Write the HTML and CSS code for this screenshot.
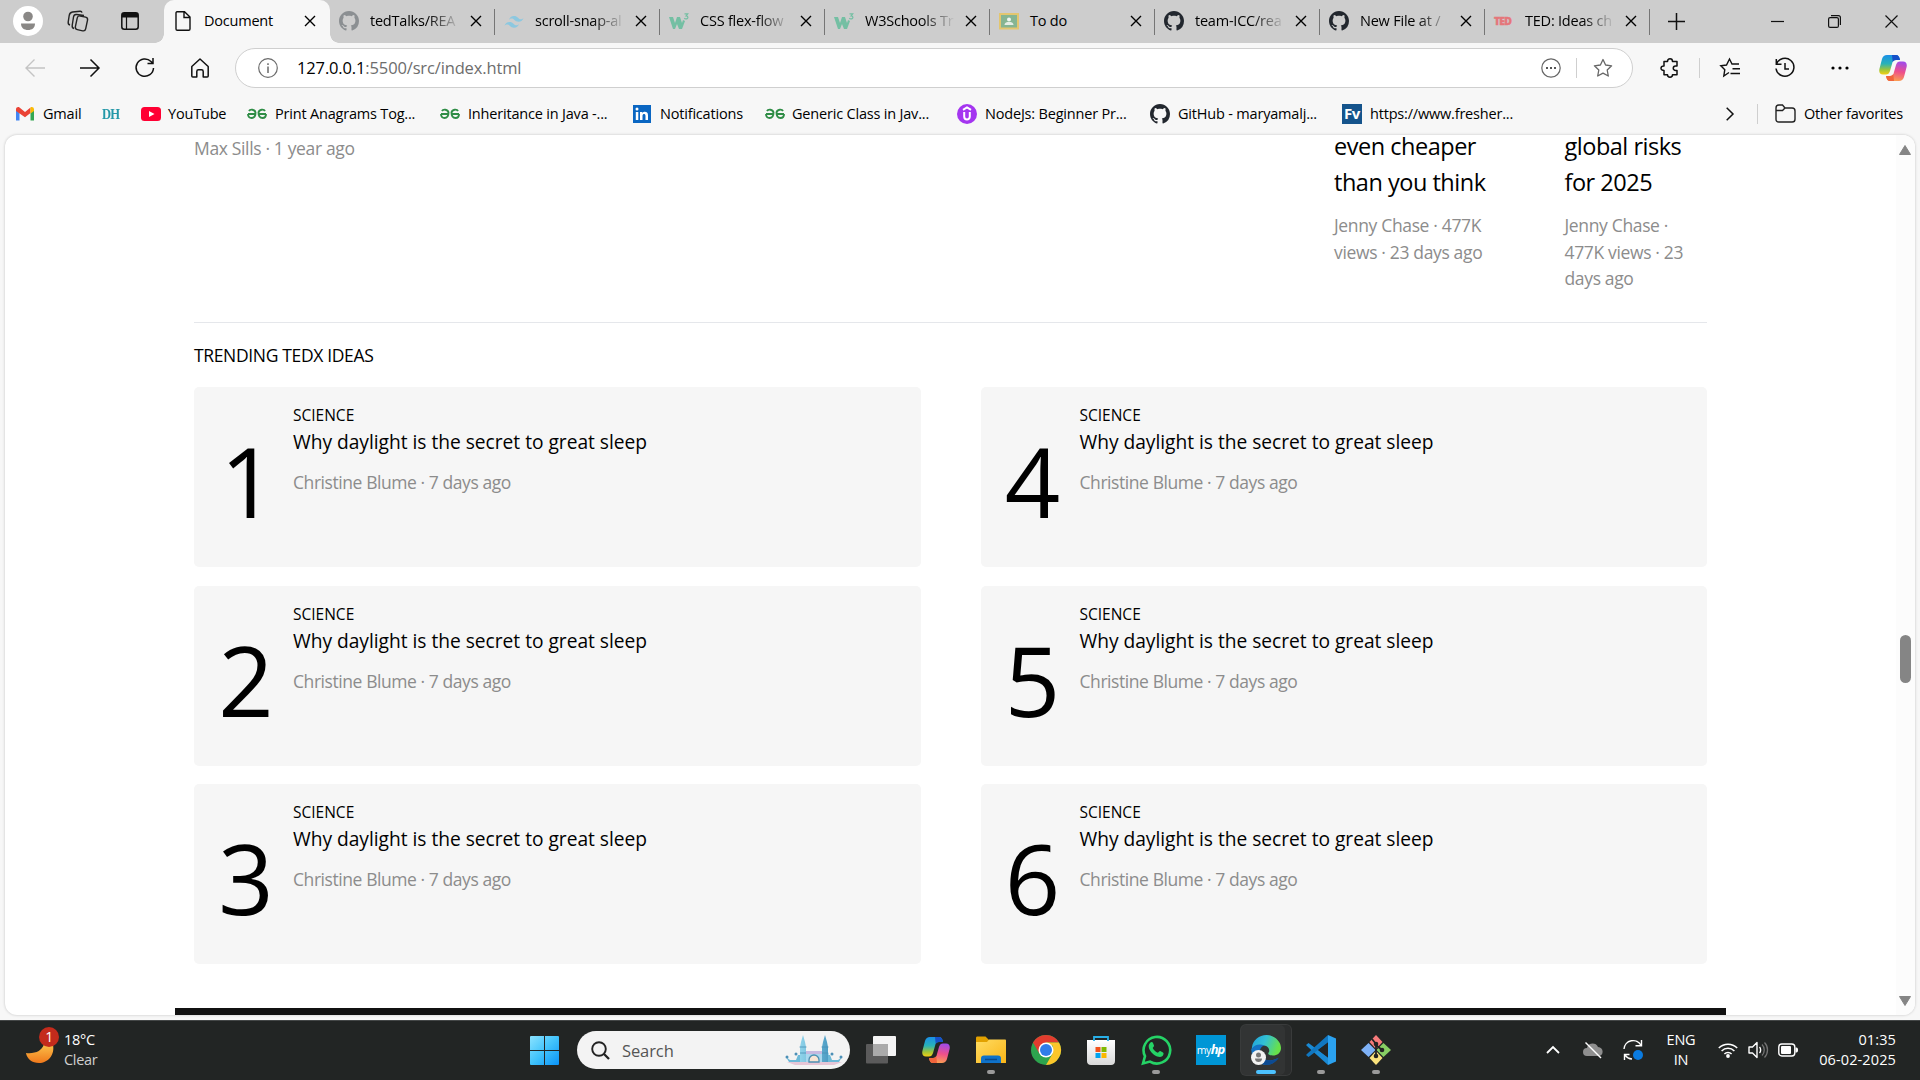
FILE: index.html
```html
<!DOCTYPE html>
<html lang="en">
<head>
<meta charset="utf-8">
<title>Document</title>
<link rel="stylesheet" href="styles.css">
</head>
<body>
<svg class="defs" aria-hidden="true">
  <defs>
    <linearGradient id="cpA" x1="0" y1="0" x2="0" y2="1"><stop offset="0" stop-color="#1a8fe8"/><stop offset=".45" stop-color="#28b2b8"/><stop offset=".75" stop-color="#9cc43c"/><stop offset="1" stop-color="#f4d013"/></linearGradient>
    <linearGradient id="cpB" x1=".6" y1="0" x2=".4" y2="1"><stop offset="0" stop-color="#a14be8"/><stop offset=".5" stop-color="#ee4f8b"/><stop offset="1" stop-color="#fba24f"/></linearGradient>
    <linearGradient id="moon" x1="0" y1="0" x2="0" y2="1"><stop offset="0" stop-color="#fbc24a"/><stop offset="1" stop-color="#f0791c"/></linearGradient>
    <linearGradient id="win" x1="0" y1="0" x2="1" y2="1"><stop offset="0" stop-color="#8be3ff"/><stop offset=".5" stop-color="#41c3fb"/><stop offset="1" stop-color="#0a93f8"/></linearGradient>
    <linearGradient id="fold" x1="0" y1="0" x2="1" y2="1"><stop offset="0" stop-color="#ffdc62"/><stop offset="1" stop-color="#f9b517"/></linearGradient>
    <linearGradient id="edgeA" x1="0" y1="0" x2="1" y2=".3"><stop offset="0" stop-color="#1f9fdc"/><stop offset=".5" stop-color="#32c0d4"/><stop offset="1" stop-color="#67e04a"/></linearGradient>
    <linearGradient id="bag" x1="0" y1="0" x2="0" y2="1"><stop offset="0" stop-color="#fff"/><stop offset="1" stop-color="#d9d9d9"/></linearGradient>
    <linearGradient id="tower" x1="0" y1="0" x2="1" y2="0"><stop offset="0" stop-color="#8fd3ea"/><stop offset="1" stop-color="#4e9dc4"/></linearGradient>
  </defs>
  <symbol id="x" viewBox="0 0 12 12"><path d="M1 1l10 10M11 1L1 11" fill="none" stroke="currentColor" stroke-width="1.4"/></symbol>
  <symbol id="github" viewBox="0 0 16 16"><path fill="currentColor" d="M8 0C3.58 0 0 3.58 0 8c0 3.54 2.29 6.53 5.47 7.59.4.07.55-.17.55-.38 0-.19-.01-.82-.01-1.49-2.01.37-2.53-.49-2.69-.94-.09-.23-.48-.94-.82-1.13-.28-.15-.68-.52-.01-.53.63-.01 1.08.58 1.23.82.72 1.21 1.87.87 2.33.66.07-.52.28-.87.51-1.07-1.78-.2-3.64-.89-3.64-3.95 0-.87.31-1.59.82-2.15-.08-.2-.36-1.02.08-2.12 0 0 .67-.21 2.2.82.64-.18 1.32-.27 2-.27s1.36.09 2 .27c1.53-1.04 2.2-.82 2.2-.82.44 1.1.16 1.92.08 2.12.51.56.82 1.27.82 2.15 0 3.07-1.87 3.75-3.65 3.95.29.25.54.73.54 1.48 0 1.07-.01 1.93-.01 2.2 0 .21.15.46.55.38A8.01 8.01 0 0016 8c0-4.42-3.58-8-8-8z"/></symbol>
  <symbol id="w3" viewBox="0 0 20 20"><path d="M0 6h4l2 6 2-6h3l2 6 1-3 2 1-3 8h-3l-2-5-2 5H4z" fill="#74bfa3"/><path d="M15.500 2.800h3.200l-1.600 2c1.200 0 1.800.7 1.800 1.500 0 1-.9 1.700-2 1.600-.8 0-1.300-.3-1.600-.8" fill="none" stroke="#74bfa3" stroke-width="1.200"/></symbol>
  <symbol id="gfg" viewBox="0 0 20 12"><path d="M9 6H1M2 3c1-2 6-2 6.500 1.500 0 4.500-2 5.500-4 5.500-1.800 0-3.500-1-3.500-4M11 6h8M18 3c-1-2-6-2-6.500 1.500 0 4.500 2 5.500 4 5.500 1.800 0 3.500-1 3.500-4" fill="none" stroke="#2f8d46" stroke-width="1.900"/></symbol>
  <symbol id="star" viewBox="0 0 20 20"><path d="M10 1.500l2.600 5.500 6 .8-4.400 4.200 1.100 6-5.300-2.900L4.700 18l1.100-6L1.400 7.800l6-.8z" fill="none" stroke="currentColor" stroke-width="1.300" stroke-linejoin="round"/></symbol>
  <symbol id="copilot" viewBox="0 0 28 26"><path d="M8 0h9c2.500 0 3.500 2 4 5h-4c-2.500 0-3.500 1.500-4 4l-2 7c-.8 2.500-2 3.500-4 3.500H4C1 19.500-.3 17.500.4 14L3 4C3.800 1.200 5.500 0 8 0z" fill="url(#cpA)"/><path d="M13 0h4c2.500 0 3.500 2 4 5h-4c-1.500 0-2.500.7-3.300 2z" fill="#1650c8"/><path d="M20 26h-9c-2.500 0-3.500-2-4-5h4c2.500 0 3.500-1.500 4-4l2-7c.8-2.500 2-3.500 4-3.500h3c3 0 4.300 2 3.600 5.500L25 22c-.8 2.800-2.500 4-5 4z" fill="url(#cpB)"/><path d="M15 26h-4c-2.500 0-3.500-2-4-5h4c1.500 0 2.500-.7 3.300-2z" fill="#f0643c"/></symbol>
</svg>

<div class="screen">
  <header class="tabstrip">
    <div class="strip-tools">
      <svg class="avatar" viewBox="0 0 30 30"><circle cx="15" cy="15" r="15" fill="#fff"/><circle cx="15" cy="10.500" r="4.800" fill="#8a8886"/><path d="M8 17.500h14c0 4.500-3 6.500-7 6.500s-7-2-7-6.500z" fill="#8a8886"/></svg>
      <svg class="spaces" viewBox="0 0 22 22"><g fill="none" stroke="#222" stroke-width="1.400" stroke-linejoin="round"><rect x="9.300" y="6.500" width="10.500" height="14" rx="2.500" transform="rotate(12 15 13)"/><path d="M7 18.500c-1.500-.5-2-1.500-1.800-3L6.500 7c.3-1.800 1.300-2.700 3-2.500l7.500 1"/><path d="M3 15c-1.500-.5-2-1.500-1.800-3l1-6.500C2.500 3.500 3.500 2.300 5.500 2l7.500-.8c1-.1 1.800.5 2 1.500"/></g></svg>
      <svg class="vert" viewBox="0 0 18 18"><rect x=".8" y=".8" width="16.400" height="16.400" rx="2.500" fill="none" stroke="#111" stroke-width="1.500"/><path d="M1 1h16v4.500H1z" fill="#111"/><path d="M5.500 5v12" stroke="#111" stroke-width="1.200"/></svg>
    </div>
    <div class="tab active"><svg class="fav doc" viewBox="0 0 20 20"><path d="M4 .8h7.500L17 6v12c0 .8-.5 1.300-1.300 1.300H4.300C3.500 19.300 3 18.800 3 18V2c0-.7.400-1.200 1-1.200zM11 1v5.500h6" fill="none" stroke="#111" stroke-width="1.400"/></svg><span class="title plain">Document</span><svg class="close"><use href="#x"/></svg></div>
    <div class="tab"><svg class="fav faded"><use href="#github"/></svg><span class="title">tedTalks/REA</span><svg class="close"><use href="#x"/></svg></div>
    <div class="tab"><svg class="fav" viewBox="0 0 20 20"><path d="M5 9c.7-2.700 2.400-4 5-4 3.800 0 4.200 2.800 6.100 3.200 1.300.3 2.400-.1 3.400-1.400-.7 2.700-2.400 4-5 4-3.800 0-4.200-2.800-6.100-3.200-1.300-.3-2.400.1-3.400 1.400zM.5 15c.7-2.700 2.400-4 5-4 3.800 0 4.200 2.800 6.100 3.200 1.300.3 2.400-.1 3.400-1.400-.7 2.700-2.400 4-5 4-3.800 0-4.200-2.800-6.100-3.200C2.600 13.300 1.500 13.700.5 15z" fill="#8cc8e0"/></svg><span class="title">scroll-snap-al</span><svg class="close"><use href="#x"/></svg></div>
    <div class="tab"><svg class="fav"><use href="#w3"/></svg><span class="title">CSS flex-flow</span><svg class="close"><use href="#x"/></svg></div>
    <div class="tab"><svg class="fav"><use href="#w3"/></svg><span class="title">W3Schools Tr</span><svg class="close"><use href="#x"/></svg></div>
    <div class="tab"><svg class="fav" viewBox="0 0 20 20"><path d="M0 2h20v16.500H0z" fill="#e3c66f"/><path d="M2 4h16v12.500H2z" fill="#86b592"/><circle cx="10" cy="8.500" r="2" fill="#f1f6f1"/><path d="M5.500 14c0-2.500 2.500-3 4.500-3s4.500.5 4.500 3z" fill="#e4ede4"/></svg><span class="title plain">To do</span><svg class="close"><use href="#x"/></svg></div>
    <div class="tab"><svg class="fav"><use href="#github"/></svg><span class="title">team-ICC/rea</span><svg class="close"><use href="#x"/></svg></div>
    <div class="tab"><svg class="fav"><use href="#github"/></svg><span class="title">New File at /</span><svg class="close"><use href="#x"/></svg></div>
    <div class="tab"><span class="fav ted">TED</span><span class="title">TED: Ideas ch</span><svg class="close"><use href="#x"/></svg></div>
    <svg class="plus" viewBox="0 0 17 17"><path d="M8.500 0v17M0 8.500h17" stroke="#111" stroke-width="1.500"/></svg>
    <div class="window-buttons">
      <svg viewBox="0 0 13 13"><path d="M0 6.500h13" stroke="#111" stroke-width="1.200"/></svg>
      <svg viewBox="0 0 13 13"><rect x=".6" y="2.600" width="9.800" height="9.800" rx="1.500" fill="none" stroke="#111" stroke-width="1.200"/><path d="M3 .6h7.400c1.200 0 2 .8 2 2V10" fill="none" stroke="#111" stroke-width="1.200"/></svg>
      <svg viewBox="0 0 13 13"><path d="M.5.5l12 12M12.500.5l-12 12" stroke="#111" stroke-width="1.200"/></svg>
    </div>
  </header>

  <div class="toolbar">
    <div class="nav">
      <svg class="disabled" viewBox="0 0 20 20"><path d="M20 10H1M9.500 1.500L1 10l8.500 8.500" fill="none" stroke="currentColor" stroke-width="1.400"/></svg>
      <svg viewBox="0 0 20 20"><path d="M0 10h19M10.500 1.500L19 10l-8.500 8.500" fill="none" stroke="currentColor" stroke-width="1.500"/></svg>
      <svg viewBox="0 0 20 20"><path d="M18.500 10A8.700 8.700 0 1 1 16 3.500L17.500 5M18 0v5.500h-5.500" fill="none" stroke="currentColor" stroke-width="1.500"/></svg>
      <svg viewBox="0 0 20 20"><path d="M1.800 8.500L10 1l8.200 7.500V18c0 .6-.4 1-1 1h-4v-5.500c0-1-.7-1.700-1.700-1.700h-3c-1 0-1.700.7-1.700 1.700V19h-4c-.6 0-1-.4-1-1z" fill="none" stroke="currentColor" stroke-width="1.500" stroke-linejoin="round"/></svg>
    </div>
    <div class="address">
      <svg class="info" viewBox="0 0 20 20"><circle cx="10" cy="10" r="9.300" fill="none" stroke="#6b6b6b" stroke-width="1.200"/><path d="M10 8.500V15M10 5.200v1.700" stroke="#6b6b6b" stroke-width="1.500"/></svg>
      <span class="url"><span class="host">127.0.0.1</span>:5500/src/index.html</span>
      <svg class="more" viewBox="0 0 20 20"><circle cx="10" cy="10" r="9.200" fill="none" stroke="#666" stroke-width="1.200"/><path d="M5 10h2M9 10h2M13 10h2" stroke="#555" stroke-width="2"/></svg>
      <i class="sep"></i>
      <svg class="fave"><use href="#star"/></svg>
    </div>
    <svg class="puzzle" viewBox="0 0 20 20"><path d="M4 3.500h3.500C7.500 2 8.500.8 10 .8s2.500 1.200 2.500 2.700H17V8h-1.500a2 2 0 0 0 0 4.500H17v4.300h-4.500c0 1.500-1 2.400-2.500 2.400s-2.500-1-2.500-2.400H4v-4.300C2.300 12.500 1 11.800 1 10.200S2.300 8 4 8z" fill="none" stroke="#111" stroke-width="1.500" stroke-linejoin="round"/></svg>
    <i class="sep"></i>
    <svg class="favlist" viewBox="0 0 20 20"><path d="M9 14.500L3.800 18l1-6.300L.8 7.800l5.700-.8L9.500 1l2.500 5h7M12.500 10.800H20M10.500 15.500H20" fill="none" stroke="#111" stroke-width="1.400"/></svg>
    <svg class="history" viewBox="0 0 20 20"><path d="M1.500 6A9 9 0 1 1 1 10.500M1.300 1v5.200h5.200M10 5v6h4" fill="none" stroke="#111" stroke-width="1.500"/></svg>
    <svg class="dots" viewBox="0 0 18 4"><circle cx="2" cy="2" r="1.600"/><circle cx="9" cy="2" r="1.600"/><circle cx="16" cy="2" r="1.600"/></svg>
    <svg class="copilot"><use href="#copilot"/></svg>
  </div>

  <nav class="bookmarks">
    <a class="b-gmail"><svg viewBox="0 0 20 20"><path d="M1 5v11.500h3.500V9z" fill="#4285f4"/><path d="M19 5v11.500h-3.500V9z" fill="#34a853"/><path d="M1 5.500C1 3 3.500 2.700 4.500 3.500L10 8l5.500-4.500V9L10 13.300 1 7z" fill="#ea4335"/><path d="M15.500 3.500C17 2.500 19 3.300 19 5.500V7l-3.500 2.600z" fill="#fbbc04"/></svg>Gmail</a>
    <a class="b-dh"><span>DH</span></a>
    <a class="b-yt"><svg viewBox="0 0 20 20"><rect y="3" width="20" height="14" rx="3.500" fill="#ff0033"/><path d="M8 7l5.500 3L8 13z" fill="#fff"/></svg>YouTube</a>
    <a class="b-ana"><svg viewBox="0 0 20 12"><use href="#gfg"/></svg>Print Anagrams Tog...</a>
    <a class="b-inh"><svg viewBox="0 0 20 12"><use href="#gfg"/></svg>Inheritance in Java -...</a>
    <a class="b-li"><svg viewBox="0 0 20 20"><path d="M1 1h18v18H1z" fill="#0a66c2"/><path d="M3.800 8h2.500v8H3.800zM8 8h2.400v1.200c1.300-2.200 5.600-1.900 5.600 2V16h-2.500v-4c0-2.600-3-2.400-3 0v4H8z" fill="#fff"/><circle cx="5" cy="5" r="1.500" fill="#fff"/></svg>Notifications</a>
    <a class="b-gen"><svg viewBox="0 0 20 12"><use href="#gfg"/></svg>Generic Class in Jav...</a>
    <a class="b-node"><svg viewBox="0 0 20 20"><circle cx="10" cy="10" r="10" fill="#a435f0"/><path d="M6 5.800l4-2.300 4 2.300M7.200 8v4.500c0 4 5.600 4 5.600 0V8" fill="none" stroke="#fff" stroke-width="2"/></svg>NodeJs: Beginner Pr...</a>
    <a class="b-git"><svg><use href="#github"/></svg>GitHub - maryamalj...</a>
    <a class="b-fv"><span class="fv">Fv</span>https://www.fresher...</a>
    <svg class="chev" viewBox="0 0 8 14"><path d="M.7.700L7 7 .7 13.300" fill="none" stroke="#111" stroke-width="1.500"/></svg>
    <i class="sep"></i>
    <a class="b-other"><svg viewBox="0 0 21 19"><path d="M1 5.500V4c0-1.700 1-3 2.800-3h3.700l2.500 3h7.200C19 4 20 5.200 20 7v8.200c0 1.700-1 2.800-2.800 2.800H3.800C2 18 1 17 1 15.200zM1 6.500h6.500l2.500-2.500" fill="none" stroke="#222" stroke-width="1.400"/></svg>Other favorites</a>
  </nav>

  <main class="viewport">
    <div class="page">
      <section class="talks">
        <div class="talk lead"><p class="meta">Max Sills · 1 year ago</p></div>
        <div class="talk second"><h2>even cheaper<br>than you think</h2><p class="meta">Jenny Chase · 477K<br>views · 23 days ago</p></div>
        <div class="talk third"><h2>global risks<br>for 2025</h2><p class="meta">Jenny Chase ·<br>477K views · 23<br>days ago</p></div>
      </section>
      <h3 class="section-title">TRENDING TEDX IDEAS</h3>
      <section class="ideas">
        <article class="card"><b class="rank one">1</b><div><p class="topic">SCIENCE</p><p class="name">Why daylight is the secret to great sleep</p><p class="meta">Christine Blume · 7 days ago</p></div></article>
        <article class="card"><b class="rank">2</b><div><p class="topic">SCIENCE</p><p class="name">Why daylight is the secret to great sleep</p><p class="meta">Christine Blume · 7 days ago</p></div></article>
        <article class="card"><b class="rank">3</b><div><p class="topic">SCIENCE</p><p class="name">Why daylight is the secret to great sleep</p><p class="meta">Christine Blume · 7 days ago</p></div></article>
        <article class="card"><b class="rank">4</b><div><p class="topic">SCIENCE</p><p class="name">Why daylight is the secret to great sleep</p><p class="meta">Christine Blume · 7 days ago</p></div></article>
        <article class="card"><b class="rank">5</b><div><p class="topic">SCIENCE</p><p class="name">Why daylight is the secret to great sleep</p><p class="meta">Christine Blume · 7 days ago</p></div></article>
        <article class="card"><b class="rank">6</b><div><p class="topic">SCIENCE</p><p class="name">Why daylight is the secret to great sleep</p><p class="meta">Christine Blume · 7 days ago</p></div></article>
      </section>
      <footer class="page-footer"></footer>
    </div>
    <div class="scrollbar">
      <svg viewBox="0 0 12 10"><path d="M6 .5l5.500 9H.5z" fill="#858585" stroke="#858585" stroke-linejoin="round"/></svg>
      <i class="thumb"></i>
      <svg viewBox="0 0 12 10"><path d="M6 9.500L.5.500h11z" fill="#858585" stroke="#858585" stroke-linejoin="round"/></svg>
    </div>
  </main>

  <footer class="taskbar">
    <div class="weather">
      <svg viewBox="0 0 34 40"><path d="M28 17c2 10-5 18-14 18-7 0-12-4-13-10 9 1 16-2 18-9z" fill="url(#moon)"/></svg>
      <span class="badge">1</span>
      <p><span>18°C</span><span class="dim">Clear</span></p>
    </div>
    <svg class="start" viewBox="0 0 29 29"><path d="M1 0h13v14H0V1a1 1 0 0 1 1-1zM15 0h13a1 1 0 0 1 1 1v13H15zM0 15h14v14H1a1 1 0 0 1-1-1zM15 15h14v13a1 1 0 0 1-1 1H15z" fill="url(#win)"/></svg>
    <div class="search">
      <svg class="lens" viewBox="0 0 19 19"><circle cx="8" cy="8" r="6.800" fill="none" stroke="#222" stroke-width="1.900"/><path d="M13 13l5 5" stroke="#222" stroke-width="2.300"/></svg>
      <span>Search</span>
      <svg class="art" viewBox="0 0 58 30"><path d="M2 27h55l-8 3H10z" fill="#e7c6d6"/><path d="M15 27V18l3-2h23l3 2v9z" fill="#a9d8ee"/><path d="M20 16h20v3H20z" fill="#c6b9e0"/><path d="M1 22l4 3h6l2-5h3v7H4zM57 22l-4 3h-6l-2-5h-3v7h12z" fill="#6cb9d8"/><path d="M15 27V12l1-5 2-7 2 7 1 5v15zM37 27V12l1-5 2-7 2 7 1 5v15z" fill="url(#tower)"/><path d="M14.500 12h7M36.500 12h7M15 18h6M37 18h6" stroke="#4a8fb5" stroke-width=".8"/><path d="M24 27v-2a5 5 0 0 1 10 0v2z" fill="#f7e5d5" stroke="#4d8fb1" stroke-width="1.300"/><circle cx="2" cy="22" r="1.500" fill="#4c8fb6"/><circle cx="56" cy="22" r="1.500" fill="#4c8fb6"/><circle cx="11" cy="19" r="1.500" fill="#4c8fb6"/><circle cx="47" cy="19" r="1.500" fill="#4c8fb6"/></svg>
    </div>
    <div class="apps">
      <span class="app"><svg viewBox="0 0 30 30"><rect x="7" y="1" width="23" height="20" rx="1" fill="#f4f4f4"/><rect y="9" width="22" height="19.500" rx="1" fill="#5b5b5b"/><path d="M7 9h15v12H7z" fill="#aaa"/></svg></span>
      <span class="app"><svg class="cp"><use href="#copilot"/></svg></span>
      <span class="app run"><svg viewBox="0 0 30 30"><path d="M0 3c0-1 .5-1.500 1.500-1.500h8L13 5v5H0z" fill="#e2a100"/><path d="M0 7h11l2-2.500h16c.6 0 1 .5 1 1V28H0z" fill="url(#fold)"/><path d="M5 28v-4.500c0-2 1-3 3-3h14c2 0 3 1 3 3V28z" fill="#0f72c9"/><path d="M9 24.500h12" stroke="#0a4a8c" stroke-width="1.500"/></svg></span>
      <span class="app"><svg viewBox="0 0 30 30"><circle cx="15" cy="15" r="15" fill="#2da44e"/><path d="M2 7.500A15 15 0 0 1 28 7.500H15L8.500 18.700z" fill="#e23c2e"/><path d="M28 7.500A15 15 0 0 1 15 30l6.500-11.200L22 11l-7-3.500z" fill="#fcc62a"/><circle cx="15" cy="15" r="7.500" fill="#fff"/><circle cx="15" cy="15" r="6" fill="#2f7de9"/></svg></span>
      <span class="app"><svg viewBox="0 0 30 30"><path d="M1 5h28v21c0 2.500-1.500 4-4 4H5c-2.500 0-4-1.500-4-4z" fill="url(#bag)"/><path d="M8 6V2h14v4" fill="none" stroke="#28b0e8" stroke-width="1.800"/><path d="M9.500 12h5v5h-5z" fill="#f1511b"/><path d="M15.500 12h5v5h-5z" fill="#80b900"/><path d="M9.500 18h5v5h-5z" fill="#00a3ee"/><path d="M15.500 18h5v5h-5z" fill="#fbb800"/></svg></span>
      <span class="app run"><svg viewBox="0 0 30 30"><path d="M2 28.500l2-7.300A13.300 13.300 0 1 1 9 26.600z" fill="none" stroke="#25d366" stroke-width="2.600"/><path d="M9 8c1-1.200 2.500-1.200 3 0l1 2.500c.3.800-1 1.800-1.300 2.500 1 2.200 2.800 3.800 5.200 4.800.8-.3 1.500-2 2.300-1.700l2.800 1.400c1.200.7.3 3-.8 3.700-2 1.500-5 .5-7.500-1C11 18.500 7.500 14.500 7.700 11c0-1 .5-2.200 1.300-3z" fill="#25d366"/></svg></span>
      <span class="app"><span class="myhp">my<b>hp</b></span></span>
      <span class="app run current"><svg viewBox="0 0 30 30"><path d="M1 12C2 5 8 0 15.500 0S30 6 30 13c0 5-4 7.500-8 7.500-4 0-6-1.500-4-3.500 1-3-1-6-5-6.500C7 9.500 2 11 .5 16z" fill="url(#edgeA)"/><path d="M.5 14c3-4.500 9-5.500 13-3.200C9 11 8 17 10 21c3 5 10 6 17 2-3 5-8 7-12 7C7 30-.5 23 .5 14z" fill="#1472c4"/><path d="M10 17c0 8 9 11 18 5.500-3 5-8 7.500-13 7.500-4 0-6-6-5-13z" fill="#0c4a92"/><circle cx="7.500" cy="22.500" r="7.500" fill="#f2f2f2"/><circle cx="7.500" cy="20" r="2.500" fill="#777"/><path d="M4 23.500h7c0 2.500-1.500 3.500-3.500 3.500S4 26 4 23.500z" fill="#777"/></svg></span>
      <span class="app run"><svg viewBox="0 0 30 30"><path d="M0 10l2.500-2L22 22.500V30L2 12z" fill="#1a8ad4"/><path d="M0 20l2.500 2L22 7.500V0L2 18z" fill="#1177c0"/><path d="M22 0l8 3.500v23L22 30z" fill="#2ba2f0"/><path d="M22 7.500V22.500L12.500 15z" fill="#222524"/></svg></span>
      <span class="app run"><svg viewBox="0 0 30 30"><path d="M15 0l6.500 7L15 14 8.500 7z" fill="#f77b7b"/><path d="M7.500 8l7 7-7 7L0 15z" fill="#7fb2f7"/><path d="M22.500 8l7.500 7-7.500 7-7-7z" fill="#88cf63"/><path d="M15 16l6.500 7L15 30l-6.500-7z" fill="#fae27c"/><path d="M11 4l4 5v12M15 10l6 5" stroke="#222" stroke-width="1.800" fill="none"/><circle cx="15" cy="9" r="2.300" fill="#222"/><circle cx="21" cy="15" r="2.300" fill="#222"/><circle cx="15" cy="21" r="2.300" fill="#222"/></svg></span>
    </div>
    <div class="tray">
      <svg class="up" viewBox="0 0 14 8"><path d="M1 7l6-6 6 6" fill="none" stroke="#fff" stroke-width="1.800"/></svg>
      <svg class="cloud" viewBox="0 0 20 20"><path d="M4 16a4 4 0 0 1 0-8c1-5.500 9-6 11-1 6 0 6 9 1 9z" fill="#8f8f8f"/><path d="M2.500 2.500L18 18" stroke="#fff" stroke-width="1.400"/></svg>
      <svg class="sync" viewBox="0 0 20 20"><path d="M1 9a9 9 0 0 1 17-3.500M18.500 0v5.800h-6M9 19a9 9 0 0 1-7-4M1.500 20v-5.500h5" fill="none" stroke="#fff" stroke-width="1.400"/><circle cx="15" cy="15" r="5" fill="#0a7be0"/></svg>
      <p class="lang"><span>ENG</span><span>IN</span></p>
      <svg class="wifi" viewBox="0 0 20 16"><path d="M.8 6a13 13 0 0 1 18.400 0M3.600 9a9 9 0 0 1 12.800 0M6.400 12a5 5 0 0 1 7.200 0" fill="none" stroke="#fff" stroke-width="1.500"/><circle cx="10" cy="14" r="1.900" fill="#fff"/></svg>
      <svg class="sound" viewBox="0 0 20 18"><path d="M1 6h3.500L9 1.500v15L4.500 12H1z" fill="none" stroke="#fff" stroke-width="1.400" stroke-linejoin="round"/><path d="M11.500 6c1.500 1.500 1.500 4.500 0 6" fill="none" stroke="#fff" stroke-width="1.400"/><path d="M14 3.500c3 3 3 8 0 11M16.500 1.500c4 4 4 11 0 15" fill="none" stroke="#737373" stroke-width="1.300"/></svg>
      <svg class="batt" viewBox="0 0 20 14"><rect x=".8" y="1" width="16" height="12" rx="3" fill="none" stroke="#fff" stroke-width="1.400"/><rect x="3" y="3" width="10" height="8" rx="1" fill="#fff"/><path d="M17.500 4.500h1c1 0 1.500 1 1.500 2.500s-.5 2.500-1.500 2.500h-1z" fill="#fff"/></svg>
      <p class="clock"><span>01:35</span><span>06-02-2025</span></p>
    </div>
  </footer>
</div>
</body>
</html>
```
FILE: styles.css
```css
* { box-sizing: border-box; margin: 0; padding: 0; }
body { font-family: "Open Sans", "Noto Sans", sans-serif; color: #000; overflow: hidden; }
svg { display: block; flex: none; overflow: visible; }
.defs { position: absolute; width: 0; height: 0; }
.screen { width: 1920px; height: 1080px; display: flex; flex-direction: column; background: #f7f7f7; }
.sep { width: 1px; height: 20px; background: #cfcfcf; flex: none; }

/* tab strip */
.tabstrip { height: 43px; flex: none; display: flex; align-items: center; background: #cdcdcd; }
.strip-tools { width: 164px; padding: 0 0 1px 13px; display: flex; align-items: center; flex: none; }
.avatar { width: 30px; height: 30px; }
.spaces { width: 22px; height: 22px; margin-left: 24px; }
.vert { width: 18px; height: 18px; margin-left: 32px; }
.tab { width: 165px; height: 43px; flex: none; display: flex; align-items: center; padding: 0 0 1px 9px; position: relative; }
.tab:not(.active)::after { content: ""; position: absolute; right: 0; top: 9px; width: 1px; height: 26px; background: #757575; }
.tab.active { width: 166px; background: #f7f7f7; border-radius: 10px 10px 0 0; }
.tab.active::before, .tab.active::after { content: ""; position: absolute; bottom: 0; width: 9px; height: 9px; }
.tab.active::before { left: -9px; background: radial-gradient(circle at 0 0, transparent 8.5px, #f7f7f7 9px); }
.tab.active::after { right: -9px; background: radial-gradient(circle at 100% 0, transparent 8.5px, #f7f7f7 9px); }
.fav { width: 20px; height: 20px; color: #22272e; flex: none; }
.faded { color: #8b8f92; }
.ted { font: 800 10.5px/20px "Open Sans", sans-serif; letter-spacing: -.9px; color: #e5767a; -webkit-text-stroke: .4px #e5767a; }
.title { width: 90px; margin-left: 11px; font-size: 14.5px; line-height: 20px; padding-bottom: 1px; letter-spacing: -.22px; white-space: nowrap; -webkit-mask-image: linear-gradient(90deg, #000 64%, transparent 100%); mask-image: linear-gradient(90deg, #000 64%, transparent 100%); }
.title.plain { -webkit-mask-image: none; mask-image: none; }
.close { width: 12px; height: 12px; margin-left: 10px; }
.plus { width: 17px; height: 17px; margin: 0 0 1px 18px; }
.window-buttons { margin-left: auto; padding: 0 22px 1px 0; display: flex; gap: 44px; }
.window-buttons svg { width: 13px; height: 13px; }

/* toolbar */
.toolbar { height: 50px; flex: none; display: flex; align-items: center; padding-right: 13px; }
.nav { display: flex; gap: 35px; padding-left: 25px; width: 235px; color: #111; flex: none; }
.nav svg { width: 20px; height: 20px; }
.nav .disabled { color: #c4c4c4; }
.address { width: 1398px; height: 40px; border: 1px solid #cfcfcf; border-radius: 20px; background: #fff; display: flex; align-items: center; padding: 0 19px 0 22px; flex: none; }
.info, .more, .fave { width: 20px; height: 20px; }
.url { margin-left: 19px; padding-bottom: 2px; font-size: 16.5px; letter-spacing: -.14px; color: #6d6d6d; }
.host { color: #000; }
.more { margin-left: auto; }
.address .sep { margin: 0 16px 0 15px; }
.fave { color: #666; }
.puzzle { width: 20px; height: 20px; margin-left: 27px; }
.toolbar > .sep { margin: 0 20px 0 19px; }
.favlist { width: 20px; height: 20px; }
.history { width: 20px; height: 20px; margin-left: 35px; }
.dots { width: 18px; height: 4px; margin-left: 36px; }
.copilot { width: 28px; height: 26px; margin-left: auto; }

/* bookmarks bar: columns start where each favourite starts */
.bookmarks { height: 42px; padding: 0 0 1px 15px; flex: none; display: grid; grid-template-columns: 86px 40px 106px 193px 192px 133px 192px 193px 192px 384px 31px 18px 1fr; align-items: center; font-size: 14.5px; letter-spacing: -.19px; }
.bookmarks a { display: flex; align-items: center; gap: 8px; white-space: nowrap; line-height: 20px; }
.bookmarks a svg { width: 20px; height: 20px; color: #22272e; }
.bookmarks .b-dh { padding-left: 1px; }
.bookmarks .b-yt { gap: 7px; }
.bookmarks .b-gen { gap: 7px; }
.b-dh span { font: 700 15px/20px "Liberation Serif", serif; letter-spacing: -1px; color: #2498a8; transform: scaleX(.84); transform-origin: left; }
.bookmarks .b-other svg { width: 21px; height: 19px; }
.fv { width: 20px; height: 20px; background: #15548c; color: #fff; font: 700 15px/19px "Open Sans", sans-serif; letter-spacing: -.5px; text-align: center; }
.chev { width: 8px; height: 14px; }

/* page viewport */
.viewport { height: 880px; flex: none; margin: 0 5px; background: #fff; border-radius: 12px; box-shadow: 0 0 3px rgba(0,0,0,.22); overflow: hidden; display: flex; }
.page { width: 1551px; margin-left: 170px; flex: none; display: flex; flex-direction: column; }
.talks { height: 188px; margin: 0 19px; border-bottom: 1px solid #e5e7eb; display: flex; }
.lead { width: 1140px; }
.second { width: 230.5px; }
.meta { font-size: 17.5px; line-height: 26.6px; letter-spacing: -.35px; color: #8c8c8c; white-space: nowrap; }
.talk h2 { font-weight: 400; font-size: 23.5px; line-height: 36px; letter-spacing: -.48px; margin: -7px 0 12px; white-space: nowrap; }
.section-title { font-weight: 400; font-size: 17.5px; line-height: 24px; letter-spacing: -.35px; margin: 20px 19px 20px; }
.ideas { margin: 0 19px; display: grid; grid-template-columns: 1fr 1fr; grid-template-rows: repeat(3, 180px); grid-auto-flow: column; gap: 18.6px 60px; }
.card { background: #f6f6f6; border-radius: 5px; display: flex; padding: 15px 0 0 20px; }
.rank { width: 64px; margin-right: 15px; text-align: center; font-weight: 400; font-size: 97px; line-height: 156px; }
.rank.one { padding-left: 4px; }
.topic { font-size: 15.5px; line-height: 26px; }
.name { font-size: 19.2px; line-height: 28px; letter-spacing: -.02px; white-space: nowrap; }
.card .meta { margin-top: 13px; letter-spacing: -.43px; }
.page-footer { margin-top: auto; height: 7px; background: #111; }
.scrollbar { margin-left: auto; width: 19px; background: #fcfcfc; display: flex; flex-direction: column; align-items: center; padding: 10px 1px 9px 0; }
.scrollbar svg { width: 12px; height: 10px; }
.thumb { width: 11px; height: 48px; border-radius: 6px; background: #858585; margin: 480px 0 auto; }

/* taskbar */
.taskbar { height: 60px; margin-top: auto; padding-bottom: 1px; flex: none; background: #222524; border-top: 1px solid #444747; display: flex; align-items: center; color: #fff; font-size: 14.5px; }
.taskbar p { display: flex; flex-direction: column; line-height: 20.5px; }
.weather { width: 530px; flex: none; display: flex; align-items: center; padding-left: 25px; position: relative; letter-spacing: -.3px; }
.weather > svg { width: 34px; height: 40px; margin-top: -4px; }
.weather p { margin-left: 5px; }
.badge { position: absolute; left: 39px; top: -3px; width: 20px; height: 20px; border-radius: 50%; background: #c42b1c; text-align: center; line-height: 20px; font-size: 14px; }
.dim { color: #cfcfcf; }
.start { width: 29px; height: 29px; }
.search { width: 273px; height: 38px; margin-left: 18px; flex: none; border-radius: 19px; background: #f3f3f3; display: flex; align-items: center; padding: 0 7px 0 14px; color: #555; font-size: 16.5px; letter-spacing: -.1px; }
.lens { width: 19px; height: 19px; }
.search span { margin-left: 12px; }
.art { width: 58px; height: 30px; margin-left: auto; }
.apps { display: flex; margin-left: 3px; }
.app { width: 55px; height: 50px; display: flex; align-items: center; justify-content: center; position: relative; }
.app > svg { width: 30px; height: 30px; }
.app > .cp { width: 28px; height: 26px; }
.run::after { content: ""; position: absolute; bottom: 1px; left: 23.5px; width: 8px; height: 4px; border-radius: 2px; background: #9a9a9a; }
.current::before { content: ""; position: absolute; left: 2.5px; top: 0; width: 50px; height: 50px; border-radius: 5px; background: #323434; box-shadow: inset -6px 0 0 #2b2d2d, 0 0 0 1px #393b3b; }
.current > svg { z-index: 1; }
.current::after { left: 17.5px; width: 20px; background: #4cc2ff; }
.myhp { width: 30px; height: 30px; background: #0096d6; font-size: 10.5px; line-height: 29px; text-align: center; letter-spacing: -.5px; }
.myhp b { font-style: italic; font-size: 13px; letter-spacing: -1px; }
.tray { margin-left: auto; padding-right: 24px; display: flex; align-items: center; }
.up { width: 14px; height: 8px; }
.cloud { width: 20px; height: 20px; margin-left: 23px; }
.sync { width: 20px; height: 20px; margin-left: 20px; }
.lang { width: 40px; margin: 0 17px 0 18px; align-items: center; letter-spacing: -.2px; }
.wifi { width: 20px; height: 16px; }
.sound { width: 20px; height: 18px; margin-left: 10px; }
.batt { width: 20px; height: 14px; margin-left: 10px; }
.clock { width: 78px; margin-left: 20px; align-items: flex-end; letter-spacing: .12px; }
```
